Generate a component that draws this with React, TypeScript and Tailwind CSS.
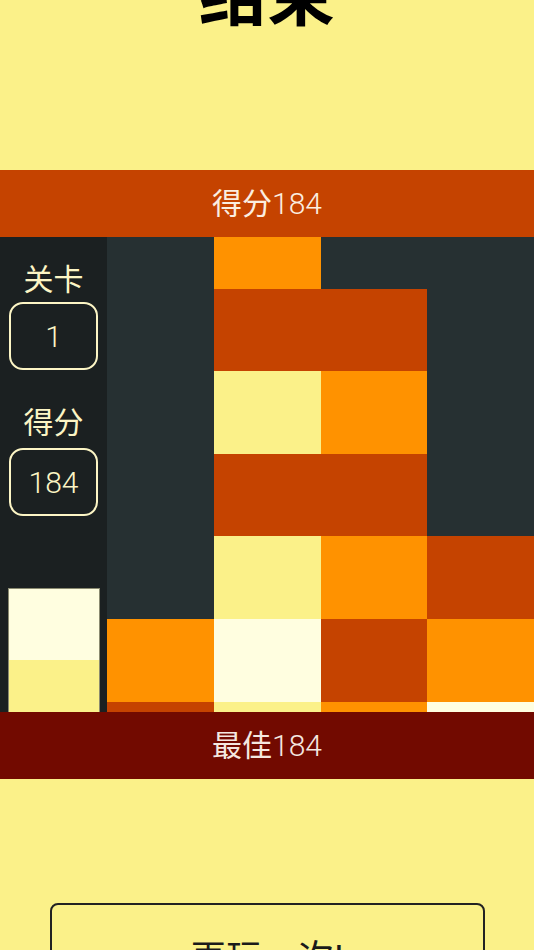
import React from "react";

const C: Record<string, string> = {
  D: "bg-transparent",
  O: "bg-[#ff9200]",
  R: "bg-[#c54300]",
  Y: "bg-[#fbf189]",
  W: "bg-[#fffee0]",
};

const rows = [
  ["D", "O", "D", "D"],
  ["D", "R", "R", "D"],
  ["D", "Y", "O", "D"],
  ["D", "R", "R", "D"],
  ["D", "Y", "O", "R"],
  ["O", "W", "R", "O"],
  ["R", "Y", "O", "W"],
];

const font = { fontFamily: '"Roboto", "Noto Sans CJK SC", sans-serif' };

export default function App() {
  return (
    <div
      className="w-[534px] h-[950px] overflow-hidden bg-[#fbf189] flex flex-col"
      style={font}
    >
      <div className="h-[170px] shrink-0 flex justify-center overflow-hidden">
        <div className="mt-[-37px] text-[68px] leading-none font-bold text-black">
          结束
        </div>
      </div>
      <div className="h-[67px] shrink-0 bg-[#c54300] flex items-center justify-center text-[30px] text-[#fbeee0]">
        <span>得分</span>
        <span className="font-light">184</span>
      </div>
      <div className="h-[475px] shrink-0 flex">
        <div className="w-[107px] shrink-0 bg-[#1b2021] flex flex-col items-center overflow-hidden pt-[28px] text-[#fcf5c5]">
          <div className="shrink-0 text-[30px] leading-none h-[30px]">关卡</div>
          <div className="shrink-0 mt-[7px] w-[89px] h-[68px] rounded-[14px] border-2 border-[#fcf5c5] flex items-center justify-center text-[30px] font-light">
            1
          </div>
          <div className="shrink-0 mt-[38px] text-[30px] leading-none h-[30px]">得分</div>
          <div className="shrink-0 mt-[10px] w-[89px] h-[68px] rounded-[14px] border-2 border-[#fcf5c5] flex items-center justify-center text-[30px] font-light">
            184
          </div>
          <div className="mt-[72px] w-[92px] shrink-0 border border-[#8a8a70] flex flex-col">
            <div className="h-[71px] shrink-0 bg-[#fffee0]" />
            <div className="h-[71px] shrink-0 bg-[#fbf189]" />
          </div>
        </div>
        <div className="flex-1 bg-[#263032] grid grid-cols-4 grid-rows-[52px_82px_83px_82px_83px_83px_10px] overflow-hidden">
          {rows.flatMap((r, i) =>
            r.map((c, j) => <div key={`${i}-${j}`} className={C[c]} />)
          )}
        </div>
      </div>
      <div className="h-[67px] shrink-0 bg-[#720a00] flex items-center justify-center text-[30px] text-[#f5e8e0]">
        <span>最佳</span>
        <span className="font-light">184</span>
      </div>
      <div className="flex-1 flex justify-center">
        <div className="mt-[124px] w-[435px] h-[100px] shrink-0 border-2 border-[#222] rounded-[8px] flex justify-center pt-[36px]">
          <span className="text-[36px] leading-none text-[#1a1a1a]">再玩一次!</span>
        </div>
      </div>
    </div>
  );
}
